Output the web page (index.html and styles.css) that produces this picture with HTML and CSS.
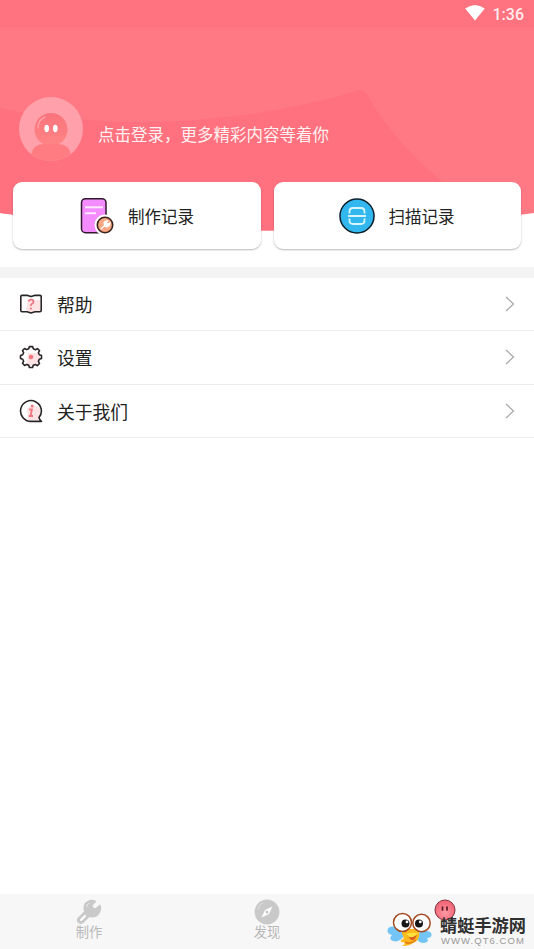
FILE: index.html
```html
<!DOCTYPE html>
<html lang="zh-CN">
<head>
<meta charset="utf-8">
<title>我的</title>
<link rel="stylesheet" href="styles.css">
</head>
<body>
<div class="app">
  <header class="hero">
    <svg class="hero-bg" viewBox="0 0 534 231" aria-hidden="true">
      <path fill="#ff7984" d="M0 0H534V213Q400 230.500 267 230.500T0 213Z"/>
      <path fill="#ff717e" d="M0 108Q68 122 140 122C230 121 300 108 360 90Q365 90 368 96Q394 143 452 190V222Q360 230.500 267 230.500Q133 230.500 0 213Z"/>
      <path fill="#ff727f" d="M0 0H534V27H0Z"/>
    </svg>
    <div class="status">
      <svg width="20" height="16" viewBox="0 0 20 16"><path fill="#fff" d="M.2 3.500Q10-3.500 19.800 3.500L10 15.600Z"/></svg>
      <span>1:36</span>
    </div>
    <div class="profile">
      <svg width="64" height="64" viewBox="0 0 64 64">
        <defs>
          <clipPath id="face"><circle cx="32" cy="32" r="32"/></clipPath>
          <linearGradient id="skin" x2="0" y2="1"><stop stop-color="#f9737c"/><stop offset="1" stop-color="#ff8585"/></linearGradient>
        </defs>
        <circle cx="32" cy="32" r="32" fill="#ffa0aa"/>
        <g clip-path="url(#face)">
          <circle cx="32" cy="32.500" r="16.500" fill="url(#skin)"/>
          <path d="M12 64V58Q14 47 25 47H39Q50 47 52 58V64Z" fill="#ff7c82"/>
        </g>
        <path d="M19 31Q19 23 26 20" fill="none" stroke="#ffa0a5" stroke-width="1.500" stroke-linecap="round"/>
        <ellipse cx="27.700" cy="31.500" rx="2.300" ry="3.700" fill="#fff"/><ellipse cx="36.300" cy="31.500" rx="2.300" ry="3.700" fill="#fff"/>
      </svg>
      <span>点击登录，更多精彩内容等着你</span>
    </div>
  </header>

  <section class="cards">
    <div class="card make">
      <svg width="36" height="38" viewBox="0 0 36 38">
        <rect x="2.500" y="1.700" width="24.500" height="34" rx="4" fill="#f48cff" stroke="#30192f" stroke-width="1.500"/>
        <path d="M6 10.200H24M6 16.200H17" stroke="#ffe5ff" stroke-width="2"/>
        <circle cx="26" cy="28" r="10.500" fill="#fff"/>
        <circle cx="26" cy="28" r="7.700" fill="#f7a783" stroke="#3a211b" stroke-width="1.600"/>
        <path d="M21.800 32.200L26 28M25 25.600Q26.500 23.500 28.500 24L27.300 26L29 27.300L31 26Q31 29 28 29.800L26 29.300Z" fill="#fff" stroke="#fff" stroke-width="1.300"/>
      </svg>
      <span>制作记录</span>
    </div>
    <div class="card scan">
      <svg width="36" height="38" viewBox="0 0 36 38">
        <circle cx="18" cy="19" r="17" fill="#32b8ef" stroke="#0b202c" stroke-width="1.500"/>
        <path d="M10.500 16.500V14.500Q10.500 11 14 11H22Q25.500 11 25.500 14.500V16.500M10.500 21.500V23.500Q10.500 27 14 27H22Q25.500 27 25.500 23.500V21.500M9 19H27" fill="none" stroke="#d7f7ff" stroke-width="1.800"/>
      </svg>
      <span>扫描记录</span>
    </div>
  </section>

  <main class="menu">
    <div class="row">
      <svg class="icon" viewBox="0 0 24 24">
        <path d="M9 8H21V20L12 21L7 18Z" fill="#ffe2e4"/>
        <path d="M1.800 4.600Q1.800 3.400 3 3.400H8.500L12 4.600L15.500 3.400H21Q22.200 3.400 22.200 4.600V18.600Q22.200 19.800 21 19.800H16L12 21L8 19.800H3Q1.800 19.800 1.800 18.600Z" fill="none" stroke="#292527" stroke-width="1.600" stroke-linejoin="round"/>
        <path d="M9.500 9.500Q9.800 7.700 12 7.700Q14.500 7.700 14.500 9.700Q14.500 11 12.700 11.900Q11.900 12.400 11.900 14" fill="none" stroke="#f17680" stroke-width="1.700"/><circle cx="11.900" cy="16.600" r="1.100" fill="#f17680"/>
      </svg>
      <span>帮助</span><svg class="chevron" viewBox="0 0 10 16"><path d="M1 1L8.500 8L1 15"/></svg>
    </div>
    <div class="row">
      <svg class="icon" viewBox="0 0 24 24">
        <path d="M9 8H19L22 14L17 20H8Z" fill="#ffe2e4"/>
        <path d="M9.700 3.800L10.400 1.600H13.600L14.300 3.800L16.400 4.700L18.500 3.600L20.600 5.700L19.400 7.700L20.300 9.800L22.500 10.400V13.600L20.300 14.300L19.400 16.400L20.500 18.500L18.300 20.600L16.300 19.500L14.200 20.300L13.600 22.500H10.400L9.800 20.300L7.700 19.400L5.600 20.500L3.500 18.300L4.600 16.300L3.700 14.200L1.500 13.600V10.400L3.700 9.800L4.600 7.700L3.500 5.600L5.600 3.500L7.700 4.600Z" fill="none" stroke="#292527" stroke-width="1.600" stroke-linejoin="round"/>
        <circle cx="12" cy="12" r="2.300" fill="#f17680"/>
      </svg>
      <span>设置</span><svg class="chevron" viewBox="0 0 10 16"><path d="M1 1L8.500 8L1 15"/></svg>
    </div>
    <div class="row">
      <svg class="icon" viewBox="0 0 24 24">
        <path d="M8 9Q14 5 21 9V16L19 21H9Z" fill="#ffe2e4"/>
        <path d="M22.500 22.400H12A10.400 10.400 0 1 1 20 18.600Q20.500 21 22.500 22.400Z" fill="none" stroke="#292527" stroke-width="1.600" stroke-linejoin="round"/>
        <path d="M10.200 10.500H12.900L11.600 17H14M9.800 17H12" fill="none" stroke="#f17680" stroke-width="1.800"/><circle cx="13.200" cy="7" r="1.500" fill="#f17680"/>
      </svg>
      <span>关于我们</span><svg class="chevron" viewBox="0 0 10 16"><path d="M1 1L8.500 8L1 15"/></svg>
    </div>
  </main>

  <nav class="tabs">
    <div class="tab">
      <svg width="26" height="26" viewBox="0 0 26 26">
        <path d="M1.500 19L8 12.500Q6 5 11.500 2Q16-.5 20.500 2.200L16.500 6.800Q17 9 19.300 9.300L24.200 5.300Q27 12 22 16.500Q18 19.500 13.500 18L7 24.300Q4 26 1.700 23.500Q0 21 1.500 19Z" fill="#c9c9c9"/>
        <path d="M5 21L9 17" stroke="#fff" stroke-width="2.200" stroke-linecap="round"/><path d="M10.500 8Q11 5 13.500 4" fill="none" stroke="#e2e2e2" stroke-width="1.200"/>
      </svg>
      <span>制作</span>
    </div>
    <div class="tab">
      <svg width="26" height="26" viewBox="0 0 26 26">
        <circle cx="13" cy="13" r="12.400" fill="#c9c9c9"/>
        <path d="M18.500 7.500L15 15L7.500 18.500L11 11Z" fill="#fff"/><circle cx="13" cy="13" r="1.500" fill="#c9c9c9"/><path d="M4 11Q5 6 9 4" fill="none" stroke="#ddd" stroke-width="1.200"/>
      </svg>
      <span>发现</span>
    </div>
    <div class="tab me">
      <svg width="22" height="22" viewBox="0 0 22 22">
        <defs><radialGradient id="ball" cy=".65"><stop stop-color="#ff9aa4"/><stop offset="1" stop-color="#f36a7b"/></radialGradient></defs>
        <circle cx="11" cy="11" r="10" fill="url(#ball)" stroke="#7e2e3b"/>
        <path d="M8.500 8V11M13 8V11" stroke="#5b1823" stroke-width="1.700" stroke-linecap="round"/>
      </svg>
    </div>
    <div class="watermark">
      <svg width="46" height="36" viewBox="0 0 46 36">
        <path d="M11 15Q1 13 .5 18Q0 22 5 23Q1 27 6 29Q12 31 17 24ZM33 20Q43 17 44.500 22Q45 26 40 26Q43 30 37 31Q31 31 29 25Z" fill="#72c5f6"/>
        <path d="M15 17L31 17Q35 27 26 31Q23 34 15 34Q19 32 17 30Q13 31 14 28Q19 27 15 22Z" fill="#ffb91d"/>
        <path d="M18 30Q23 33 29 28" fill="none" stroke="#e67b13" stroke-width="1.500"/>
        <path d="M20 23Q26 24 30 21Q29 29 24 28Z" fill="#d85825"/><path d="M19 22Q25 20 31 21Q28 26 22 25Z" fill="#ffe03b"/>
        <circle cx="15.500" cy="10.500" r="9" fill="#fff" stroke="#a44c23" stroke-width="1.500"/><circle cx="34.500" cy="11" r="8.700" fill="#fff" stroke="#a44c23" stroke-width="1.500"/>
        <circle cx="18.500" cy="11.500" r="4" fill="#161616"/><circle cx="32" cy="11.500" r="4" fill="#161616"/>
        <circle cx="20" cy="9.900" r="1.400" fill="#fff"/><circle cx="33.300" cy="9.900" r="1.400" fill="#fff"/>
      </svg>
      <div class="brand"><strong>蜻蜓手游网</strong><small>WWW.QT6.COM</small></div>
    </div>
  </nav>
</div>
</body>
</html>
```
FILE: styles.css
```css
* { box-sizing: border-box; }
body {
  margin: 0;
  background: #fff;
  color: #222;
  font-family: Roboto, "Noto Sans CJK SC", sans-serif;
}
svg { display: block; flex: none; }
.app { height: 949px; display: flex; flex-direction: column; overflow: hidden; }
.hero { position: relative; height: 182px; flex: none; }
.hero-bg { position: absolute; top: 0; left: 0; width: 534px; height: 231px; }
.status, .profile { position: relative; display: flex; align-items: center; color: #fff; }
.status {
  height: 27px;
  padding: 0 10px 0 0;
  justify-content: flex-end;
  gap: 8px;
  font-size: 16px;
}
.status svg { margin-bottom: 2px; }
.status span { padding-top: 2px; color: #ffecee; font-weight: 500; }
.profile { padding: 70px 0 0 19px; gap: 15px; font-size: 16.5px; }
.profile span { padding-top: 14px; color: #fff0f1; line-height: 20px; }
.cards { position: relative; display: grid; grid-template-columns: 1fr 1fr; gap: 13px; padding: 0 13px; height: 85px; flex: none; }
.card {
  display: flex;
  align-items: center;
  height: 67px;
  background: #fff;
  border-radius: 9px;
  box-shadow: 0 1px 2px rgba(0, 0, 0, .28);
  font-size: 16.5px;
}
.make { padding-left: 66px; gap: 13px; }
.scan { padding-left: 65px; gap: 14px; }
.menu { border-top: 11px solid #f4f4f4; }
.row { display: flex; align-items: center; height: 53.3px; padding: 0 19px; border-bottom: 1px solid #ededed; font-size: 17.8px; }
.icon { width: 24px; height: 24px; margin-right: 14px; }
.chevron { width: 10px; height: 16px; margin-left: auto; fill: none; stroke: #aaa; stroke-width: 1.3; }
.tabs { position: relative; display: grid; grid-template-columns: repeat(3, 1fr); height: 55px; margin-top: auto; background: #f7f7f7; }
.tab { display: flex; flex-direction: column; align-items: center; padding-top: 5px; font-size: 13.3px; line-height: 18px; color: #b8b8b8; }
.tab svg { margin-bottom: -1px; }
.watermark { position: absolute; left: 387px; top: 17px; display: flex; align-items: flex-start; gap: 7px; padding-top: 1px; }
.brand { display: flex; flex-direction: column; padding-top: 4px; white-space: nowrap; }
.brand strong { color: #303030; font-size: 17.2px; line-height: 20px; font-weight: 700; }
.brand small { color: #999; font-family: "Liberation Sans", sans-serif; font-size: 9.5px; line-height: 9px; letter-spacing: 1.05px; padding-left: 1px; }
```
